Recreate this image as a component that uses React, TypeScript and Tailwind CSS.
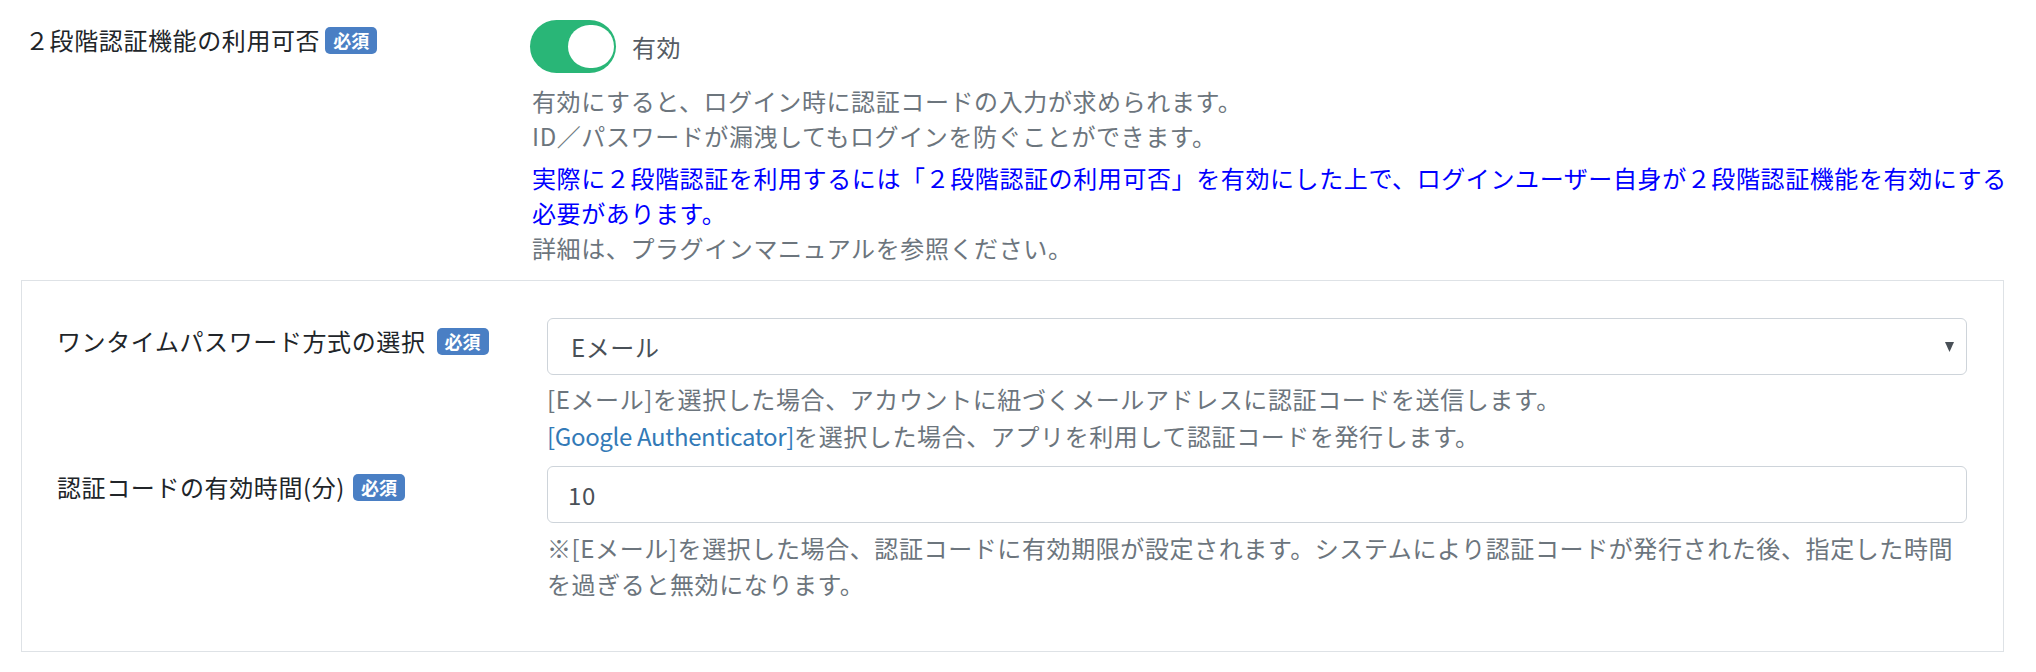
import React from "react";

const font = { fontFamily: '"Noto Sans CJK JP", "Noto Sans", sans-serif' };

function Badge() {
  return (
    <span className="inline-flex items-center justify-center h-[27px] px-[8px] rounded-[5px] bg-[#4a7fc4] text-white text-[18px] font-bold leading-none tracking-normal">
      必須
    </span>
  );
}

export default function App() {
  return (
    <div
      className="w-[2036px] h-[672px] bg-white text-[24px] leading-[36px] tracking-[0.6px] text-[#212529] overflow-hidden"
      style={font}
    >
      {/* Row 1 */}
      <div className="flex pt-[20px]">
        <div className="w-[509px] shrink-0 pl-[25px] pt-[2px]">
          <div className="flex items-center gap-[5px] h-[36px]">
            <span>２段階認証機能の利用可否</span>
            <Badge />
          </div>
        </div>
        <div className="flex-1 pl-[21px] pr-[22px]">
          <div className="flex items-center">
            <div className="w-[86px] h-[53px] rounded-full bg-[#29b677] flex items-center justify-end pr-[2px]">
              <div className="w-[46px] h-[43px] rounded-full bg-white" />
            </div>
            <span className="ml-[16px] text-[#555b63]">有効</span>
          </div>
          <div className="mt-[10px] pl-[2px] text-[#6c757d] leading-[35px] whitespace-nowrap">
            <div>有効にすると、ログイン時に認証コードの入力が求められます。</div>
            <div>ID／パスワードが漏洩してもログインを防ぐことができます。</div>
            <div className="text-[#0000ff] mt-[7px]">
              実際に２段階認証を利用するには「２段階認証の利用可否」を有効にした上で、ログインユーザー自身が２段階認証機能を有効にする
              <br />
              必要があります。
            </div>
            <div>詳細は、プラグインマニュアルを参照ください。</div>
          </div>
        </div>
      </div>

      {/* Box */}
      <div className="ml-[21px] mt-[15px] w-[1983px] border border-[#dee2e6] pt-[37px] pb-[49px]">
        {/* Row A */}
        <div className="flex">
          <div className="w-[525px] shrink-0 pl-[35px] pt-[5px]">
            <div className="flex items-center gap-[11px] h-[36px]">
              <span>ワンタイムパスワード方式の選択</span>
              <Badge />
            </div>
          </div>
          <div className="w-[1420px] shrink-0">
            <div className="h-[57px] rounded-[6px] border border-[#ced4da] flex items-center justify-between pl-[23px] pr-[12px] text-[#495057]">
              <span>Eメール</span>
              <svg width="9" height="10" viewBox="0 0 9 10">
                <polygon points="0,0 9,0 4.5,10" fill="#495057" />
              </svg>
            </div>
            <div className="mt-[5px] text-[#6c757d] leading-[37px] whitespace-nowrap">
              <div>[Eメール]を選択した場合、アカウントに紐づくメールアドレスに認証コードを送信します。</div>
              <div>
                <span className="text-[#337ab7] tracking-[-0.35px]">[Google Authenticator]</span>を選択した場合、アプリを利用して認証コードを発行します。
              </div>
            </div>
          </div>
        </div>

        {/* Row B */}
        <div className="flex mt-[12px]">
          <div className="w-[525px] shrink-0 pl-[35px] pt-[3px]">
            <div className="flex items-center gap-[8px] h-[36px]">
              <span>認証コードの有効時間(分)</span>
              <Badge />
            </div>
          </div>
          <div className="w-[1420px] shrink-0">
            <div className="h-[57px] rounded-[6px] border border-[#ced4da] flex items-center pl-[20px] text-[#495057]">
              <span>10</span>
            </div>
            <div className="mt-[7px] text-[#6c757d] leading-[36px] whitespace-nowrap">
              ※[Eメール]を選択した場合、認証コードに有効期限が設定されます。システムにより認証コードが発行された後、指定した時間
              <br />
              を過ぎると無効になります。
            </div>
          </div>
        </div>
      </div>
    </div>
  );
}
